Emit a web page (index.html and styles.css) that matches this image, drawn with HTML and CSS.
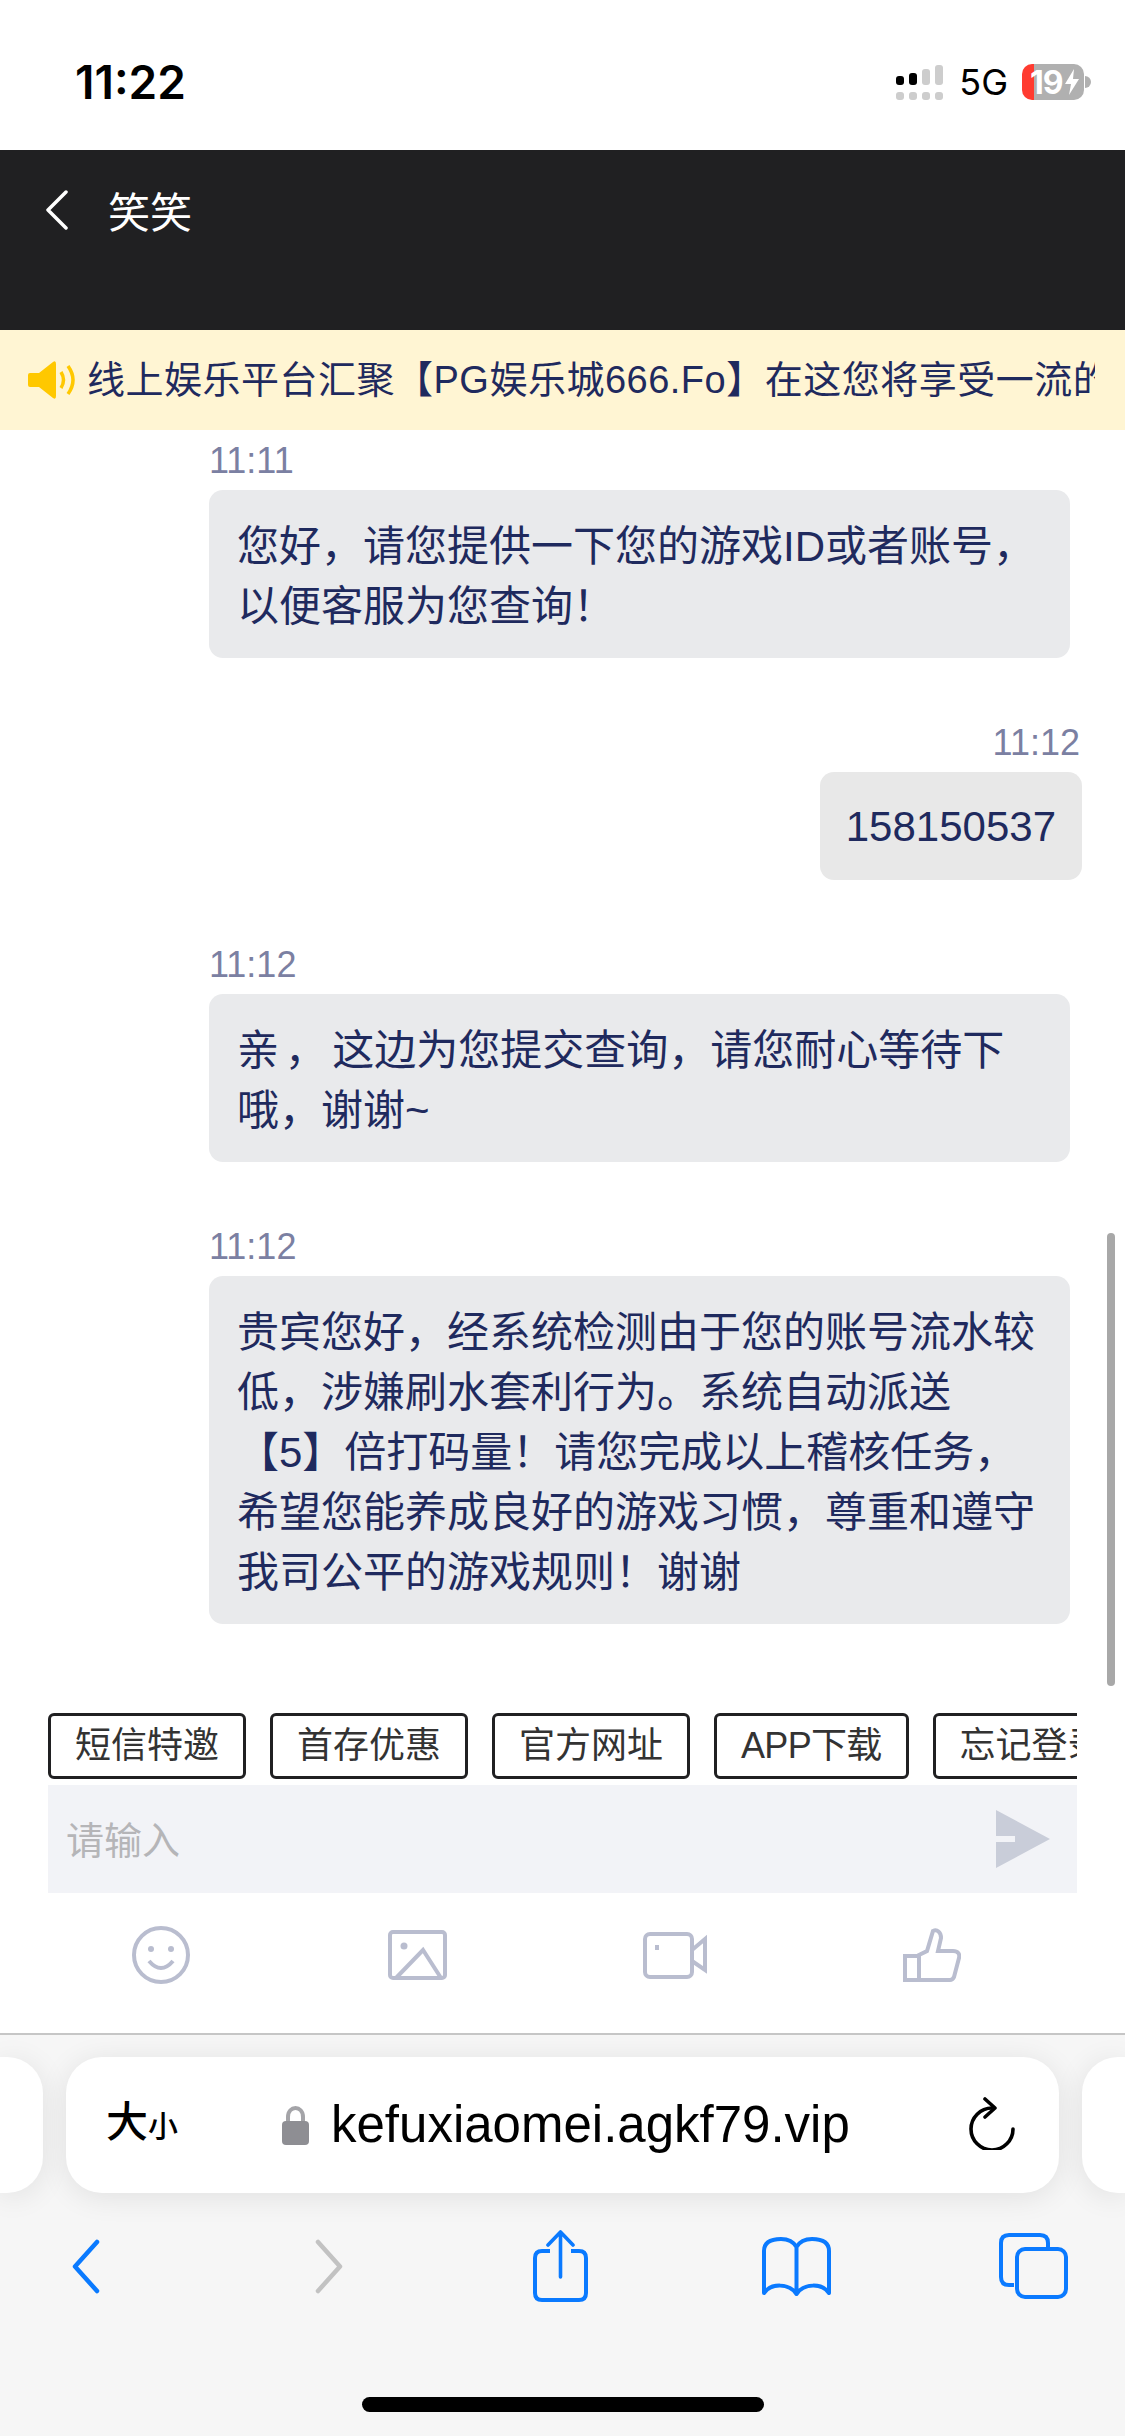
FILE: index.html
```html
<!DOCTYPE html>
<html lang="zh-CN">
<head>
    <meta charset="UTF-8">
    <meta name="viewport" content="width=device-width, initial-scale=1.0">
    <title>笑笑</title>
    <link rel="stylesheet" href="styles.css">
</head>
<body>
    <div class="phone">
        <!-- iOS status bar -->
        <div class="status-bar">
            <span class="clock">11:22</span>
            <div class="status-right">
                <svg class="signal" width="47" height="35" viewBox="0 0 47 35">
                    <rect x="0" y="11" width="8" height="9" rx="3" fill="#000"/>
                    <rect x="13" y="8" width="8" height="12" rx="3" fill="#000"/>
                    <rect x="26" y="4" width="8" height="16" rx="3" fill="#cdcdcd"/>
                    <rect x="39" y="0" width="8" height="20" rx="3" fill="#cdcdcd"/>
                    <rect x="0" y="27" width="8" height="8" rx="3" fill="#cdcdcd"/>
                    <rect x="13" y="27" width="8" height="8" rx="3" fill="#cdcdcd"/>
                    <rect x="26" y="27" width="8" height="8" rx="3" fill="#cdcdcd"/>
                    <rect x="39" y="27" width="8" height="8" rx="3" fill="#cdcdcd"/>
                </svg>
                <span class="network">5G</span>
                <div class="battery">
                    <div class="battery-body">
                        <span>19</span>
                        <svg width="14" height="26" viewBox="0 0 14 26"><polygon points="9,0 0,15 6,15 4,26 14,10 8,10" fill="#fff"/></svg>
                    </div>
                    <div class="battery-nub"></div>
                </div>
            </div>
        </div>

        <div class="chat-header">
            <svg width="23" height="40" viewBox="0 0 23 40"><polyline points="21,2 3,20 21,38" fill="none" stroke="#fff" stroke-width="3.5" stroke-linecap="round" stroke-linejoin="round"/></svg>
            <span class="chat-title">笑笑</span>
        </div>

        <div class="notice">
            <svg width="50" height="38" viewBox="0 0 50 38">
                <path d="M2 12 H11 L25 1 Q28 -1 28 3 V35 Q28 39 25 37 L11 26 H2 Q0 26 0 24 V14 Q0 12 2 12 Z" fill="#ffc800"/>
                <path d="M33 11 Q38 19 33 27" fill="none" stroke="#ffc800" stroke-width="3.5"/>
                <path d="M40 5 Q50 19 40 33" fill="none" stroke="#ffc800" stroke-width="3.5"/>
            </svg>
            <div class="notice-text">线上娱乐平台汇聚【PG娱乐城666.Fo】在这您将享受一流的游戏体验</div>
        </div>

        <div class="chat-list">
            <div class="msg">
                <div class="msg-time">11:11</div>
                <div class="bubble">您好，请您提供一下您的游戏ID或者账号，以便客服为您查询！</div>
            </div>
            <div class="msg msg-self">
                <div class="msg-time">11:12</div>
                <div class="bubble">158150537</div>
            </div>
            <div class="msg">
                <div class="msg-time">11:12</div>
                <div class="bubble">亲 ， 这边为您提交查询，请您耐心等待下哦，谢谢~</div>
            </div>
            <div class="msg">
                <div class="msg-time">11:12</div>
                <div class="bubble">贵宾您好，经系统检测由于您的账号流水较低，涉嫌刷水套利行为。系统自动派送<br>【5】倍打码量！请您完成以上稽核任务，<br>希望您能养成良好的游戏习惯，尊重和遵守<br>我司公平的游戏规则！谢谢</div>
            </div>
            <div class="scrollbar"></div>
        </div>

        <div class="quick-row">
            <span class="chip">短信特邀</span>
            <span class="chip">首存优惠</span>
            <span class="chip">官方网址</span>
            <span class="chip chip-latin">APP下载</span>
            <span class="chip">忘记登录</span>
        </div>

        <div class="input-box">
            <span class="placeholder">请输入</span>
            <svg width="54" height="58" viewBox="0 0 54 58"><polygon points="0,0 54,29 0,58 0,32 19,32 19,26 0,26" fill="#c9cdd9"/></svg>
        </div>

        <div class="tools">
            <svg width="58" height="58" viewBox="0 0 58 58" class="tool-icon">
                <circle cx="29" cy="29" r="27" />
                <circle cx="19" cy="23" r="3" class="solid"/>
                <circle cx="39" cy="23" r="3" class="solid"/>
                <path d="M17 35 Q29 49 41 35"/>
            </svg>
            <svg width="59" height="50" viewBox="0 0 59 50" class="tool-icon">
                <rect x="2" y="2" width="55" height="46" rx="3"/>
                <circle cx="16" cy="16" r="3.5" class="solid"/>
                <path d="M8 48 L35 20 L53 48"/>
            </svg>
            <svg width="64" height="47" viewBox="0 0 64 47" class="tool-icon">
                <rect x="2" y="2" width="47" height="43" rx="5"/>
                <rect x="12" y="13" width="4" height="5" class="solid"/>
                <path d="M49 18 L62 7 V38 L49 29"/>
            </svg>
            <svg width="58" height="54" viewBox="0 0 58 54" class="tool-icon">
                <path d="M16 52 V27 L24 23 L30 3 C34 1 38 4 38 10 L35 23 H50 C55 23 57 26 56 30 L51 49 C50 51 49 52 47 52 Z"/>
                <path d="M2 28 H16 V52 H2 Z"/>
            </svg>
        </div>

        <!-- Safari bottom bar -->
        <div class="browser-bar">
            <div class="url-row">
                <div class="tab-peek tab-peek-left"></div>
                <div class="url-bar">
                    <span class="text-size">大<small>小</small></span>
                    <svg class="lock" width="27" height="39" viewBox="0 0 27 39">
                        <path d="M6 18 V11 C6 -1 21 -1 21 11 V18" fill="none" stroke="#a4a4a8" stroke-width="4"/>
                        <rect x="0" y="15" width="27" height="24" rx="4" fill="#8e8e93"/>
                    </svg>
                    <span class="url-text">kefuxiaomei.agkf79.vip</span>
                    <svg class="reload" width="47" height="53" viewBox="0 0 47 53">
                        <path d="M44 32 A21 21 0 1 1 23 11" fill="none" stroke="#000" stroke-width="3.6" stroke-linecap="round"/>
                        <polyline points="16,2 26,11 16,20" fill="none" stroke="#000" stroke-width="3.6" stroke-linecap="round" stroke-linejoin="round"/>
                    </svg>
                </div>
                <div class="tab-peek tab-peek-right"></div>
            </div>
            <div class="nav-row">
                <svg class="nav-back" width="28" height="55" viewBox="0 0 28 55"><polyline points="25,3 3,27.5 25,52" fill="none" stroke="#0a7aff" stroke-width="4.5" stroke-linecap="round" stroke-linejoin="round"/></svg>
                <svg class="nav-forward" width="28" height="55" viewBox="0 0 28 55"><polyline points="3,3 25,27.5 3,52" fill="none" stroke="#c2c2c2" stroke-width="4.5" stroke-linecap="round" stroke-linejoin="round"/></svg>
                <svg class="nav-share" width="55" height="72" viewBox="0 0 55 72">
                    <path d="M17 21 H9 Q2 21 2 28 V63 Q2 70 9 70 H46 Q53 70 53 63 V28 Q53 21 46 21 H38" fill="none" stroke="#0a7aff" stroke-width="4"/>
                    <path d="M27.5 47 V3 M15 15 L27.5 2 L40 15" fill="none" stroke="#0a7aff" stroke-width="3.6" stroke-linecap="round" stroke-linejoin="round"/>
                </svg>
                <svg class="nav-book" width="71" height="59" viewBox="0 0 71 59">
                    <path d="M35.5 10 C32 4 26 2 20 2 C9 2 3 6 3 14 V56 C10 46 28 46 35.5 57 C43 46 61 46 68 56 V14 C68 6 62 2 51 2 C45 2 39 4 35.5 10 V57" fill="none" stroke="#0a7aff" stroke-width="4" stroke-linejoin="round"/>
                </svg>
                <svg class="nav-tabs" width="69" height="66" viewBox="0 0 69 66">
                    <path d="M15 52 H10 Q2 52 2 44 V10 Q2 2 10 2 H41 Q49 2 49 10 V15" fill="none" stroke="#0a7aff" stroke-width="4"/>
                    <rect x="18" y="16" width="49" height="48" rx="8" fill="none" stroke="#0a7aff" stroke-width="4"/>
                </svg>
            </div>
            <div class="home-indicator"></div>
        </div>
    </div>
</body>
</html>
```

FILE: styles.css
```css
* {
    box-sizing: border-box;
}

body {
    margin: 0;
    padding: 0;
    background-color: #fff;
    font-family: "Liberation Sans", "Noto Sans CJK SC", sans-serif;
}

.phone {
    width: 1125px;
    height: 2436px;
    display: flex;
    flex-direction: column;
    overflow: hidden;
}

/* Status bar */
.status-bar {
    height: 150px;
    flex: none;
    display: flex;
    justify-content: space-between;
    align-items: flex-start;
    padding: 58px 34px 0 75px;
}

.clock {
    font-family: Inter, sans-serif;
    font-size: 46px;
    line-height: 48px;
    font-weight: 600;
    color: #000;
}

.status-right {
    display: flex;
    align-items: center;
    margin-top: 6px;
}

.network {
    margin-left: 16px;
    font-family: Inter, sans-serif;
    font-size: 36px;
    line-height: 36px;
    color: #000;
}

.battery {
    margin-left: 14px;
    display: flex;
    align-items: center;
}

.battery-body {
    width: 62px;
    height: 36px;
    border-radius: 10px;
    background: linear-gradient(to right, #ff3b30 12px, #b0b0b0 12px);
    display: flex;
    align-items: center;
    padding-left: 8px;
    gap: 2px;
    color: #fff;
    font-family: Inter, sans-serif;
    font-size: 32px;
    font-weight: 700;
    letter-spacing: -1px;
}

.battery-nub {
    width: 6px;
    height: 12px;
    margin-left: 1px;
    border-radius: 0 6px 6px 0;
    background-color: #b0b0b0;
}

/* Header */
.chat-header {
    height: 180px;
    flex: none;
    background-color: #202022;
    display: flex;
    align-items: flex-start;
    padding: 40px 0 0 45px;
    gap: 40px;
}

.chat-title {
    color: #fff;
    font-size: 42px;
    line-height: 48px;
}

.notice {
    height: 100px;
    flex: none;
    background-color: #fff5d3;
    display: flex;
    align-items: center;
    padding: 0 30px 0 28px;
    gap: 9px;
}

.notice-text {
    flex: 1;
    overflow: hidden;
    white-space: nowrap;
    color: #1f2a5e;
    font-size: 38px;
    line-height: 50px;
    letter-spacing: 0.5px;
}

/* Messages */
.chat-list {
    position: relative;
    flex: 1;
    min-height: 0;
    overflow: hidden;
    padding: 9px 43px 0 209px;
}

.msg {
    margin-bottom: 63px;
}

.msg-time {
    height: 40px;
    margin-bottom: 11px;
    color: #7b80a2;
    font-size: 36px;
    line-height: 43px;
}

.bubble {
    width: 861px;
    padding: 27px 28px 21px;
    border-radius: 14px;
    background-color: #e9eaec;
    color: #1f2a5e;
    font-size: 42px;
    line-height: 60px;
    word-spacing: -6px;
}

.msg-self {
    display: flex;
    flex-direction: column;
    align-items: flex-end;
}

.msg-self .msg-time {
    margin-right: 2px;
}

.msg-self .bubble {
    width: auto;
    background-color: #e8e8e8;
    padding: 25px 26px 23px;
}

/* overlay scroll thumb */
.scrollbar {
    position: absolute;
    top: 803px;
    left: 1107px;
    width: 8px;
    height: 453px;
    border-radius: 4px;
    background-color: #a8a8a8;
}

/* Quick replies */
.quick-row {
    flex: none;
    display: flex;
    gap: 24px;
    margin: 0 48px 6px 48px;
    overflow: hidden;
}

.chip {
    flex: none;
    height: 66px;
    padding: 0 24px;
    border: 3px solid #202022;
    border-radius: 6px;
    color: #333;
    font-size: 36px;
    line-height: 60px;
}

.chip-latin {
    letter-spacing: -0.7px;
}

.input-box {
    flex: none;
    height: 108px;
    margin: 0 48px;
    padding: 0 27px 0 18px;
    background-color: #f2f3f7;
    display: flex;
    justify-content: space-between;
    align-items: center;
}

.placeholder {
    margin-bottom: 3px;
    color: #b5b5b8;
    font-size: 38px;
}

.tools {
    flex: none;
    height: 140px;
    display: grid;
    grid-template-columns: repeat(4, 257px);
    justify-items: center;
    align-items: center;
    padding: 0 0 16px 32px;
}

.tool-icon {
    fill: none;
    stroke: #b9bdcf;
    stroke-width: 4;
}

.tool-icon .solid {
    fill: #b9bdcf;
    stroke: none;
}

/* Browser chrome */
.browser-bar {
    flex: none;
    height: 403px;
    background-color: #f6f6f6;
    border-top: 2px solid #c6c6c6;
    display: flex;
    flex-direction: column;
}

.url-row {
    display: flex;
    gap: 23px;
    margin-top: 22px;
}

.url-bar {
    flex: 1;
    height: 136px;
    padding: 0 43px 0 40px;
    border-radius: 36px;
    background-color: #fff;
    box-shadow: 0 4px 30px rgba(0, 0, 0, 0.09);
    display: flex;
    align-items: center;
}

.tab-peek {
    width: 43px;
    flex: none;
    background-color: #fff;
    box-shadow: 0 4px 30px rgba(0, 0, 0, 0.09);
}

.tab-peek-left {
    border-radius: 0 36px 36px 0;
}

.tab-peek-right {
    border-radius: 36px 0 0 36px;
}

.text-size {
    width: 176px;
    color: #000;
    font-size: 42px;
    font-weight: 500;
    line-height: 50px;
}

.text-size small {
    font-size: 30px;
}

.lock {
    flex: none;
}

.url-text {
    flex: 1;
    margin-left: 22px;
    color: #000;
    font-size: 51px;
    line-height: 56px;
}

.reload {
    flex: none;
    margin-bottom: 4px;
}

.nav-row {
    display: flex;
    align-items: center;
    height: 72px;
    margin-top: 37px;
}

.nav-back {
    margin-left: 72px;
}

.nav-forward {
    margin-left: 215px;
}

.nav-share {
    margin-left: 190px;
}

.nav-book {
    margin-left: 173px;
}

.nav-tabs {
    margin-left: 167px;
}

.home-indicator {
    width: 402px;
    height: 15px;
    margin: 95px 0 0 362px;
    border-radius: 8px;
    background-color: #000;
}
```
